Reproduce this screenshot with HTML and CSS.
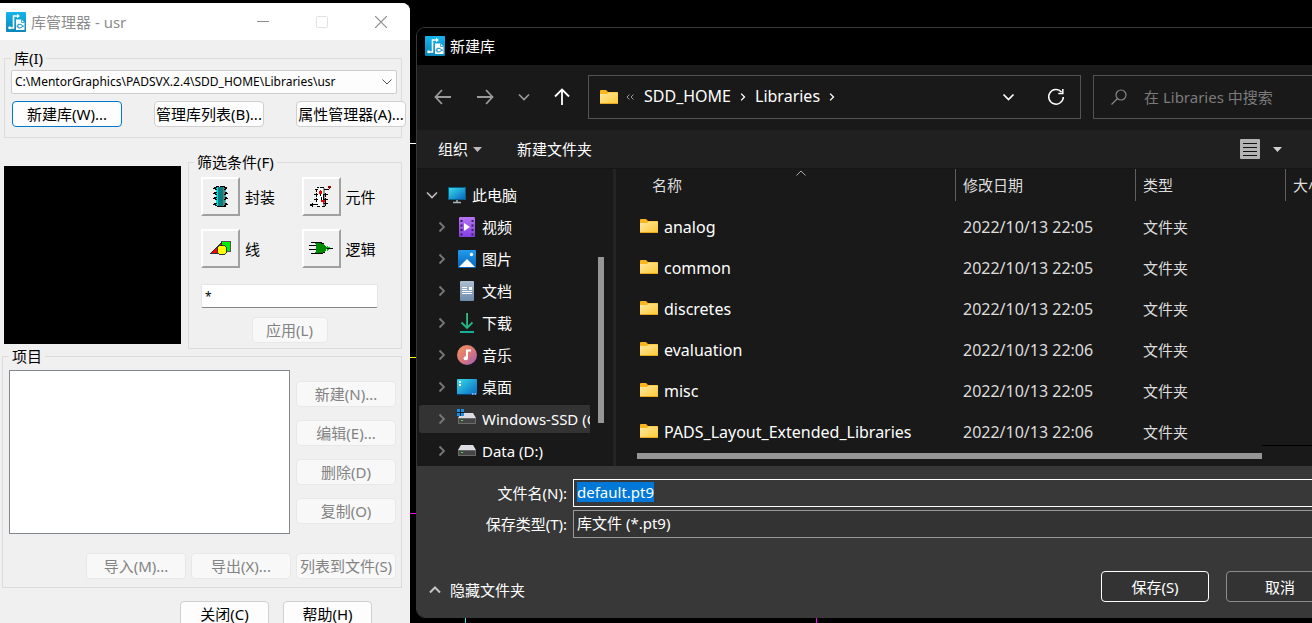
FILE: index.html
```html
<!DOCTYPE html>
<html lang="zh-CN">
<head>
<meta charset="utf-8">
<title>库管理器 - usr</title>
<link rel="stylesheet" href="styles.css">
</head>
<body>
<svg class="defs" aria-hidden="true">
  <defs>
    <linearGradient id="gApp" x1="0" y1="0" x2="0" y2="1"><stop offset="0" stop-color="#16b4ee"/><stop offset="1" stop-color="#0a86b6"/></linearGradient>
    <linearGradient id="gFolder" x1="0" y1="0" x2="1" y2="1"><stop offset="0" stop-color="#ffe9a0"/><stop offset="1" stop-color="#fdc834"/></linearGradient>
    <linearGradient id="gScreen" x1="0" y1="0" x2="1" y2="1"><stop offset="0" stop-color="#35dbe6"/><stop offset="1" stop-color="#0a66c4"/></linearGradient>
    <linearGradient id="gVideo" x1="0" y1="0" x2="0" y2="1"><stop offset="0" stop-color="#b673f2"/><stop offset="1" stop-color="#8340e4"/></linearGradient>
    <linearGradient id="gPic" x1="0" y1="0" x2="0" y2="1"><stop offset="0" stop-color="#219cec"/><stop offset="1" stop-color="#0763bb"/></linearGradient>
    <linearGradient id="gDoc" x1="0" y1="0" x2="0" y2="1"><stop offset="0" stop-color="#aebfd2"/><stop offset="1" stop-color="#6f8cac"/></linearGradient>
    <linearGradient id="gDown" x1="0" y1="0" x2="0" y2="1"><stop offset="0" stop-color="#35c578"/><stop offset="1" stop-color="#16ad9c"/></linearGradient>
    <linearGradient id="gMusic" x1="0" y1="0" x2="1" y2="1"><stop offset="0" stop-color="#f29358"/><stop offset=".55" stop-color="#d9757c"/><stop offset="1" stop-color="#985bc4"/></linearGradient>
    <symbol id="app" viewBox="0 0 20 20">
      <rect width="20" height="20" rx="1" fill="url(#gApp)"/>
      <path d="M3.500 16H7.500V4h4.500" fill="none" stroke="#fff" stroke-width="1.600"/>
      <circle cx="3.700" cy="15.800" r="1.500" fill="#fff"/><path d="M11 1.800 14 4l-3 2.200z" fill="#fff"/>
      <path d="M10 7.500h5.500L18.500 10.500V18H10z" fill="#fff"/>
      <path d="M15.500 7.500v3h3" fill="none" stroke="#0f9fd2" stroke-width=".8"/>
      <path d="M12 12.300h2c3 0 3 3.600 0 3.600h-2zM10.500 14.100H12M16 14.100h2" fill="none" stroke="#0d8fc2" stroke-width="1"/>
    </symbol>
    <symbol id="folder" viewBox="0 0 18 14">
      <path d="M0 1a1 1 0 0 1 1-1h5l2 2h9a1 1 0 0 1 1 1v3H0z" fill="#fcb61a"/>
      <path d="M0 4h7l1.500-1.500H18V13a1 1 0 0 1-1 1H1a1 1 0 0 1-1-1z" fill="url(#gFolder)"/>
      <path d="M0 13.500h18" stroke="#e9a81c" stroke-width="1"/>
    </symbol>
    <symbol id="right" viewBox="0 0 8 12"><path d="M1.500 1.500 6 6l-4.500 4.500" fill="none" stroke="currentColor" stroke-width="1.800"/></symbol>
    <symbol id="down" viewBox="0 0 12 8"><path d="M1 1.500 6 6.500l5-5" fill="none" stroke="currentColor" stroke-width="1.700"/></symbol>
    <symbol id="drive" viewBox="0 0 18 12">
      <path d="M3 0h12l3 5H0z" fill="#dcdce2"/><rect y="5" width="18" height="6" fill="#6a6a6a"/>
      <rect x="1" y="6" width="16" height="4" fill="#454545"/><rect x="3" y="7" width="2" height="1" fill="#3fe83f"/>
    </symbol>
  </defs>
</svg>

<main class="desktop">
  <i class="mark mark-white"></i><i class="mark mark-yellow"></i><i class="mark mark-magenta"></i>
  <i class="mark mark-cyan"></i><i class="mark mark-violet"></i>

  <section class="manager">
    <header class="manager-title">
      <svg class="app-icon"><use href="#app"/></svg>
      <h1 class="manager-name">库管理器 - usr</h1>
      <button class="caption" type="button" aria-label="最小化"><svg width="12" height="12"><path d="M0 5.500h12" stroke="#8c8c8c"/></svg></button>
      <button class="caption" type="button" aria-label="最大化" disabled><svg width="12" height="12"><rect x=".5" y=".5" width="11" height="11" rx="1" fill="none" stroke="#e2e2e2"/></svg></button>
      <button class="caption" type="button" aria-label="关闭窗口"><svg width="12" height="12"><path d="M0 0l12 12M12 0 0 12" stroke="#8c8c8c" stroke-width="1.200"/></svg></button>
    </header>

    <div class="manager-body">
      <fieldset class="group library">
        <legend>库(I)</legend>
        <div class="combo">
          <select aria-label="库"><option>C:\MentorGraphics\PADSVX.2.4\SDD_HOME\Libraries\usr</option></select>
          <svg class="combo-arrow" width="10" height="6"><path d="M.5.5 5 5 9.500.5" fill="none" stroke="#555"/></svg>
        </div>
        <div class="library-actions">
          <button class="btn btn-default" type="button">新建库(W)...</button>
          <button class="btn" type="button">管理库列表(B)...</button>
          <button class="btn" type="button">属性管理器(A)...</button>
        </div>
      </fieldset>

      <div class="middle">
        <div class="preview"></div>
        <fieldset class="group filter">
          <legend>筛选条件(F)</legend>
          <div class="types">
            <div class="type">
              <button class="tool" type="button" aria-labelledby="l1">
                <svg width="24" height="24" shape-rendering="crispEdges"><path d="M7 2h10v19H7z" fill="#00e0e0"/><path d="M9 2h5v19H9z" fill="#008080"/><path d="M14 2h2v19h-2z" fill="#777"/><path d="M7 1h3v1H7zM11 1h5v1h-5zM8 21h9v1H8z"/><path d="M5 2h3v1H5zM4 3h3v1H4zM6 4h2v1H6zM5 7h3v1H5zM4 8h3v1H4zM6 9h2v1H6zM5 12h3v1H5zM4 13h3v1H4zM6 14h2v1H6zM5 18h3v1H5zM4 19h3v1H4zM6 20h2v1H6zM15 2h3v1h-3zM16 3h2v1h-2zM15 4h2v1h-2zM16 7h2v1h-2zM16 8h3v1h-3zM15 9h2v1h-2zM16 12h2v1h-2zM16 13h3v1h-3zM15 14h2v1h-2zM16 18h2v1h-2zM16 19h3v1h-3zM15 20h2v1h-2z"/></svg>
              </button><span id="l1">封装</span>
            </div>
            <div class="type">
              <button class="tool" type="button" aria-labelledby="l2">
                <svg width="24" height="24" shape-rendering="crispEdges"><path d="M8 3h6v19H8z" fill="#fff"/><path d="M14 3h2v19h-2z" fill="#999"/><path d="M8 2h2v1H8zM11 2h4v1h-4zM8 21h3v1H8zM13 21h3v1h-3z"/><path d="M6 4h3v1H6zM7 5h1v2H7zM5 9h4v1H5zM7 8h1v4H7zM5 14h4v1H5zM7 13h1v4H7zM3 19h6v1H3zM15 4h5v1h-5zM15 9h4v1h-4zM16 8h1v4h-1zM15 14h4v1h-4zM16 13h1v4h-1zM15 18h4v1h-4zM16 17h1v4h-1zM1 19h3v2H1zM3 18h1v4H3z"/><path d="M11 6h1v5h-1zM12 12h1v5h-1zM14 9h1v6h-1z"/><path d="M11 5h1v1h1v3h-3V6h1zM12 15h4v2h-1v2h-1v-2h-2z" fill="#e00"/><path d="M19 1h3v2h-1v1h-1V3h-1z" fill="#900"/></svg>
              </button><span id="l2">元件</span>
            </div>
            <div class="type">
              <button class="tool" type="button" aria-labelledby="l3">
                <svg width="24" height="24" shape-rendering="crispEdges"><path d="M12 4h9v10h-9z" fill="#00f000" stroke="#555"/><path d="M12 6v10H2z" fill="#f00" stroke="#333"/><circle cx="13" cy="13" r="5" fill="#ff0" stroke="#333"/></svg>
              </button><span id="l3">线</span>
            </div>
            <div class="type">
              <button class="tool" type="button" aria-labelledby="l4">
                <svg width="26" height="24" shape-rendering="crispEdges"><path d="M3 5h4v1H3zM1 8h9v1H1zM1 12h9v1H1zM3 16h4v1H3z"/><path d="M7 6h7c3 1 4 3 5 5-1 3-2 4-5 5H7c2-3 2-7 0-10z" fill="#008a00"/><path d="M6 5h8v1h2v1h-3V6H6zM6 16h9v1H6zM15 15h2v1h-2z"/><path d="M19 9l4 2-4 3z" fill="#0c2"/><path d="M19 11h6v1h-6z"/></svg>
              </button><span id="l4">逻辑</span>
            </div>
          </div>
          <input class="pattern" type="text" value="*" aria-label="筛选条件">
          <button class="btn btn-apply" type="button" disabled>应用(L)</button>
        </fieldset>
      </div>

      <fieldset class="group items">
        <legend>项目</legend>
        <div class="items-top">
          <div class="listbox" role="listbox" aria-label="项目"></div>
          <div class="items-side">
            <button class="btn" type="button" disabled>新建(N)...</button>
            <button class="btn" type="button" disabled>编辑(E)...</button>
            <button class="btn" type="button" disabled>删除(D)</button>
            <button class="btn" type="button" disabled>复制(O)</button>
          </div>
        </div>
        <div class="items-bottom">
          <button class="btn" type="button" disabled>导入(M)...</button>
          <button class="btn" type="button" disabled>导出(X)...</button>
          <button class="btn" type="button" disabled>列表到文件(S)</button>
        </div>
      </fieldset>

      <footer class="manager-foot">
        <button class="btn" type="button">关闭(C)</button>
        <button class="btn" type="button">帮助(H)</button>
      </footer>
    </div>
  </section>

  <section class="dialog">
    <header class="dialog-title"><svg class="app-icon"><use href="#app"/></svg><h2>新建库</h2></header>

    <nav class="navbar">
      <div class="nav-buttons">
        <button class="icon-btn dim" type="button" aria-label="后退"><svg width="18" height="16"><path d="M17 8H2M8 1 1.500 8 8 15" fill="none" stroke="currentColor" stroke-width="1.800"/></svg></button>
        <button class="icon-btn dim" type="button" aria-label="前进"><svg width="18" height="16"><path d="M1 8h15M10 1l6.500 7L10 15" fill="none" stroke="currentColor" stroke-width="1.800"/></svg></button>
        <button class="icon-btn dim" type="button" aria-label="最近位置"><svg width="12" height="8"><use href="#down"/></svg></button>
        <button class="icon-btn" type="button" aria-label="上一级"><svg width="16" height="18"><path d="M8 17V2M1 8.500 8 1.500l7 7" fill="none" stroke="currentColor" stroke-width="1.800"/></svg></button>
      </div>
      <div class="address">
        <svg class="folder"><use href="#folder"/></svg>
        <svg class="more" width="8" height="6"><path d="M3.500.5 1 3l2.500 2.500M7.500.5 5 3l2.500 2.500" fill="none" stroke="#999"/></svg>
        <a href="#home">SDD_HOME</a>
        <svg class="sep"><use href="#right"/></svg>
        <a href="#libraries">Libraries</a>
        <svg class="sep"><use href="#right"/></svg>
        <span class="grow"></span>
        <button class="icon-btn" type="button" aria-label="历史记录"><svg width="13" height="8"><use href="#down"/></svg></button>
        <button class="icon-btn icon-refresh" type="button" aria-label="刷新"><svg width="18" height="18"><path d="M14.500 4A7.300 7.300 0 1 0 16.300 9M15.800 1v4.500h-4.500" fill="none" stroke="currentColor" stroke-width="1.500"/></svg></button>
      </div>
      <label class="search">
        <svg width="16" height="16"><circle cx="10" cy="6" r="5" fill="none" stroke="#858585" stroke-width="1.200"/><path d="M6.500 9.500.5 15.500" stroke="#858585" stroke-width="1.200"/></svg>
        <input type="search" placeholder="在 Libraries 中搜索" aria-label="搜索">
      </label>
    </nav>

    <div class="toolbar">
      <button class="text-btn" type="button">组织<svg width="9" height="5"><path d="M0 0h9L4.500 5z" fill="#bbb"/></svg></button>
      <button class="text-btn" type="button">新建文件夹</button>
      <span class="grow"></span>
      <button class="text-btn view" type="button" aria-label="更改视图"><svg width="20" height="20"><rect width="20" height="20" rx="1" fill="#b3b3b3"/><path d="M3 4.500h14M3 8.500h14M3 12.500h14M3 16.500h14" stroke="#111"/></svg><svg width="9" height="5"><path d="M0 0h9L4.500 5z" fill="#d0d0d0"/></svg></button>
    </div>

    <div class="browser">
      <div class="tree-pane">
        <ul class="tree">
          <li class="node root"><svg class="open"><use href="#down"/></svg><svg class="ico"><rect x="1" y="2" width="18" height="13" fill="#0a5d84"/><rect x="2" y="3" width="16" height="11" fill="url(#gScreen)"/><path d="M6 17.500h8M10 15v2" stroke="#a9b5bd" stroke-width="1.500"/></svg>此电脑</li>
          <li class="node"><svg class="shut"><use href="#right"/></svg><svg class="ico"><rect x="2" width="16" height="20" rx="1" fill="url(#gVideo)"/><path d="M4.500 3v16M15.500 3v16" stroke="#36215c" stroke-width="2" stroke-dasharray="2 2.500"/><path d="M7 6l6 4-6 4z" fill="#fff"/></svg>视频</li>
          <li class="node"><svg class="shut"><use href="#right"/></svg><svg class="ico"><rect x="1" y="1" width="18" height="18" rx="1" fill="url(#gPic)"/><path d="M2 18l8-8 8 8z" fill="#fff"/><circle cx="14.500" cy="5.500" r="1.700" fill="#fff"/></svg>图片</li>
          <li class="node"><svg class="shut"><use href="#right"/></svg><svg class="ico"><rect x="3" width="14" height="20" rx="1" fill="url(#gDoc)"/><path d="M5 6.500h5M5 8.500h5M5 10.500h10M5 12.500h10" stroke="#fff"/><rect x="12" y="6" width="3" height="3" fill="#fff"/></svg>文档</li>
          <li class="node"><svg class="shut"><use href="#right"/></svg><svg class="ico"><path d="M9.200 0h1.800v15H9.200zM3 18h14v2H3z" fill="url(#gDown)"/><path d="M4.500 9.500 10 15l5.500-5.500" fill="none" stroke="#20b888" stroke-width="1.800"/></svg>下载</li>
          <li class="node"><svg class="shut"><use href="#right"/></svg><svg class="ico"><circle cx="10" cy="10" r="10" fill="url(#gMusic)"/><ellipse cx="8.800" cy="13.200" rx="2.200" ry="2" fill="#fff"/><path d="M10 4.500v9M10 5.500h4" stroke="#fff" stroke-width="2"/></svg>音乐</li>
          <li class="node"><svg class="shut"><use href="#right"/></svg><svg class="ico"><rect y="2" width="20" height="16" rx="1" fill="url(#gScreen)"/><path d="M2 5h2M2 8h2" stroke="#fff" stroke-width="2"/><path d="M0 17.500h20" stroke="#093f76"/><path d="M15 17h1.500M17.500 17H19" stroke="#fff"/></svg>桌面</li>
          <li class="node current"><svg class="shut"><use href="#right"/></svg><svg class="ico"><use href="#drive" x="1" y="4" width="18" height="12"/><path d="M0 0h7v7H0z" fill="#1c1c1c"/><path d="M0 0h3v3H0zM4 0h3v3H4zM0 4h3v3H0zM4 4h3v3H4z" fill="#1591e6"/></svg>Windows-SSD (C:)</li>
          <li class="node"><svg class="shut"><use href="#right"/></svg><svg class="ico"><use href="#drive" x="1" y="4" width="18" height="12"/></svg>Data (D:)</li>
        </ul>
        <div class="vbar"><div class="vthumb"></div></div>
      </div>

      <div class="files">
        <svg class="sort" width="10" height="6"><path d="M.5 5.500 5 1l4.500 4.500" fill="none" stroke="#aaa"/></svg>
        <table>
          <colgroup><col class="c-name"><col class="c-date"><col class="c-type"><col class="c-size"></colgroup>
          <thead><tr><th>名称</th><th>修改日期</th><th>类型</th><th>大小</th></tr></thead>
          <tbody>
            <tr><td class="latin"><svg class="folder"><use href="#folder"/></svg>analog</td><td class="latin">2022/10/13 22:05</td><td>文件夹</td><td></td></tr>
            <tr><td class="latin"><svg class="folder"><use href="#folder"/></svg>common</td><td class="latin">2022/10/13 22:05</td><td>文件夹</td><td></td></tr>
            <tr><td class="latin"><svg class="folder"><use href="#folder"/></svg>discretes</td><td class="latin">2022/10/13 22:05</td><td>文件夹</td><td></td></tr>
            <tr><td class="latin"><svg class="folder"><use href="#folder"/></svg>evaluation</td><td class="latin">2022/10/13 22:06</td><td>文件夹</td><td></td></tr>
            <tr><td class="latin"><svg class="folder"><use href="#folder"/></svg>misc</td><td class="latin">2022/10/13 22:05</td><td>文件夹</td><td></td></tr>
            <tr><td class="latin"><svg class="folder"><use href="#folder"/></svg>PADS_Layout_Extended_Libraries</td><td class="latin">2022/10/13 22:06</td><td>文件夹</td><td></td></tr>
          </tbody>
        </table>
        <div class="hbar"><div class="hthumb"></div></div>
      </div>
    </div>

    <form class="save">
      <div class="fields">
        <label for="fname">文件名(N):</label>
        <input id="fname" class="field field-active" type="text" value="default.pt9">
        <label for="ftype">保存类型(T):</label>
        <select id="ftype" class="field"><option>库文件 (*.pt9)</option></select>
      </div>
      <div class="actions">
        <button class="text-btn hide" type="button"><svg width="12" height="8"><path d="M1 6.500 6 1.500l5 5" fill="none" stroke="#c4c4c4" stroke-width="2"/></svg>隐藏文件夹</button>
        <span class="grow"></span>
        <button class="dlg-btn primary" type="button">保存(S)</button>
        <button class="dlg-btn" type="button">取消</button>
      </div>
    </form>
  </section>
</main>
<script src="main.js"></script>
</body>
</html>
```
FILE: main.js
```js
const fileName = document.getElementById('fname');
fileName.focus({ preventScroll: true });
fileName.select();
```
FILE: styles.css
```css
* { box-sizing: border-box; }
html, body { overflow: clip; }
body { margin: 0; background: #000; font: 15px/20px "Noto Sans", "Noto Sans CJK SC", sans-serif; }
button, input, select { font: inherit; color: inherit; margin: 0; }
button { padding: 0; background: none; border: 0; white-space: nowrap; }
svg { flex: none; }
h1, h2 { margin: 0; font-size: 15px; font-weight: 400; }
.defs { position: absolute; width: 0; height: 0; }
.grow { flex: 1; }
.app-icon { width: 20px; height: 20px; }
.folder { width: 18px; height: 14px; }

.desktop { position: relative; height: 100vh; overflow: clip; background: #000; }
.mark { position: absolute; left: 410px; width: 6px; height: 1px; }
.mark-white { top: 143px; background: #fff; }
.mark-yellow { top: 357px; background: #ff0; }
.mark-magenta { top: 513px; background: #f0f; }
.mark-cyan { left: 465px; top: 618px; width: 1px; height: 5px; background: #2ee; }
.mark-violet { left: 816px; top: 618px; width: 1px; height: 5px; background: #f0f; }

/* Library manager window */
.manager { position: absolute; left: 0; top: 3px; width: 410px; border-radius: 0 8px 0 0; overflow: clip; background: #f0f0f0; color: #000; }
.manager-title { display: flex; align-items: center; height: 37px; padding-left: 6px; background: #fff; }
.manager-name { flex: 1; padding-left: 5px; color: #8c8c8c; }
.caption { display: flex; align-items: center; justify-content: center; width: 59px; height: 36px; }
.manager-body { padding: 8px 8px 12px 2px; }
.group { min-width: 0; margin: 0; border: 1px solid #dcdcdc; }
.group legend { padding: 0 3px; height: 20px; }

.btn { height: 26px; border: 1px solid #d0d0d0; border-radius: 4px; background: #fdfdfd; }
.btn-default { border: 1px solid #0078d4; }
.btn:disabled { color: #838383; border-color: #e8e8e8; background: #f8f8f8; }

.library { margin-left: 2px; padding: 2px 4px 10px 6px; }
.combo { position: relative; }
.combo select { display: block; width: 100%; height: 24px; padding: 0 3px; border: 1px solid #ccc; border-radius: 2px; background: #fdfdfd; appearance: none; font-size: 12px; }
.combo-arrow { position: absolute; right: 5px; top: 9px; }
.library-actions { display: flex; gap: 32px; margin: 7px -8px 0 1px; }
.library-actions .btn { flex: none; width: 110px; }

.middle { display: flex; gap: 7px; margin: 14px 0 0 2px; }
.preview { width: 177px; height: 178px; margin-top: 14px; background: #000; }
.filter { flex: 1; padding: 5px 23px 5px 12px; }
.filter legend { margin-left: -7px; }
.types { display: grid; grid-template-columns: 1fr 1fr; gap: 13px 24px; }
.type { display: flex; align-items: center; gap: 5px; white-space: nowrap; }
.tool { display: flex; flex: none; align-items: center; justify-content: center; width: 39px; height: 39px; border: 2px solid; border-color: #fff #a0a0a0 #a0a0a0 #fff; background: #f0f0f0; }
.pattern { display: block; width: 100%; height: 24px; margin: 16px 0 9px; padding: 0 3px; border: 1px solid #e5e5e5; border-bottom-color: #858585; border-radius: 2px; background: #fff; font-size: 12px; }
.btn-apply { display: block; width: 76px; margin: 0 auto; }

.items { padding: 7px 5px 8px 6px; }
.items legend { height: 14px; line-height: 14px; }
.items-top { display: flex; gap: 6px; }
.listbox { flex: 1; height: 164px; border: 1px solid #828790; background: #fff; }
.items-side { display: grid; gap: 13px; align-content: start; width: 100px; padding-top: 11px; }
.items-bottom { display: flex; justify-content: flex-end; gap: 5px; margin-top: 19px; }
.items-bottom .btn { width: 100px; }
.manager-foot { display: flex; justify-content: flex-end; gap: 14px; padding: 13px 30px 0 0; }
.manager-foot .btn { width: 89px; }

/* Save dialog */
.dialog { position: absolute; left: 416px; right: -40px; top: 27px; border: 1px solid #383838; border-radius: 9px; overflow: clip; background: #191919; color: #fff; }
.dialog-title { display: flex; align-items: center; gap: 5px; height: 37px; padding: 0 8px 2px; background: #000; }
.navbar { display: flex; align-items: center; height: 65px; padding: 0 13px 2px 17px; background: #191919; }
.nav-buttons { display: flex; align-items: center; width: 154px; gap: 24px; }
.icon-btn { display: flex; align-items: center; color: #fff; }
.dim { color: #9a9a9a; }
.address, .search { display: flex; align-items: center; height: 44px; border: 1px solid #535353; }
.address { flex: 1; padding: 0 15px 0 11px; }
.address a { padding-bottom: 2px; font-size: 16px; color: #fff; text-decoration: none; }
.more { margin: 0 10px 0 8px; }
.sep { width: 6px; height: 10px; margin: 0 9px; }
.icon-refresh { margin-left: 32px; }
.search { width: 245px; margin-left: 12px; padding-left: 17px; gap: 17px; }
.search input { flex: 1; min-width: 0; padding: 0; border: 0; outline: 0; background: none; }
.search input::placeholder { color: #7b7b7b; }
.toolbar { display: flex; align-items: center; gap: 35px; height: 39px; padding: 0 69px 0 21px; background: #202020; border-bottom: 1px solid #161616; }
.text-btn { display: flex; align-items: center; gap: 5px; color: #fff; }
.view { gap: 13px; }

.browser { display: flex; height: 297px; }
.tree-pane { display: flex; flex: none; width: 199px; padding-left: 2px; border-right: 3px solid #242424; }
.tree { flex: none; width: 171px; margin: 0; padding: 12px 0 0; list-style: none; overflow: clip; }
.node { display: flex; align-items: center; height: 28px; margin-bottom: 4px; padding-left: 19px; white-space: nowrap; }
.root { padding-left: 7px; }
.root .open { margin-right: 9px; }
.open { width: 12px; height: 8px; color: #bbb; }
.shut { width: 8px; height: 12px; margin-right: 11px; color: #777; }
.ico { width: 20px; height: 20px; margin-right: 5px; }
.current { background: #333; border-radius: 3px 0 0 3px; }
.vbar { padding: 88px 0 0 8px; }
.vthumb { width: 6px; height: 166px; background: #969696; }

.files { position: relative; flex: 1; min-width: 0; overflow: clip; }
.files::after { content: ""; position: absolute; left: 646px; right: 0; top: 276px; height: 1px; background: #000; }
.sort { position: absolute; left: 180px; top: 1px; }
.files table { width: 759px; table-layout: fixed; border-collapse: separate; border-spacing: 0; }
.c-name { width: 339px; }
.c-date { width: 180px; }
.c-type { width: 150px; }
.c-size { width: 90px; }
.files th { height: 32px; padding: 0 0 0 7px; text-align: left; font-weight: 400; color: #ddd; border-left: 1px solid #606060; }
.files th:first-child { padding-left: 36px; border-left: 0; }
.files thead::after { content: ""; display: block; height: 5px; }
.files td { height: 41px; padding: 0 0 0 8px; color: #ddd; white-space: nowrap; }
.files .latin { font-size: 16px; }
.files td:first-child { padding-left: 24px; color: #fff; }
.files .folder { margin-right: 6px; }
.hbar { padding: 1px 89px 0 21px; }
.hthumb { height: 6px; background: #969696; }

.save { background: #383838; padding: 13px 0 15px; }
.fields { display: grid; grid-template-columns: 150px 1fr; gap: 3px 6px; align-items: center; padding-right: 13px; }
.fields label { text-align: right; }
.field { width: 100%; height: 28px; padding: 0 3px 2px; border: 1px solid #999; border-radius: 0; background: #333; appearance: none; outline: 0; }
.field-active { border-color: #fff; background: #383838; }
.field::selection { background: #0078d7; color: #fff; }
.actions { display: flex; align-items: center; gap: 17px; margin-top: 33px; padding: 0 17px 0 12px; }
.hide { gap: 9px; padding-top: 6px; }
.dlg-btn { width: 108px; height: 31px; border: 1px solid #8c8c8c; border-radius: 4px; background: #333; color: #fff; }
.primary { border-color: #fff; }
```
